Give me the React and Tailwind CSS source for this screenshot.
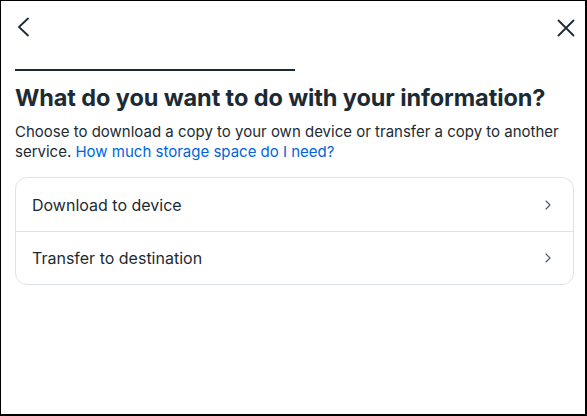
import { ChevronRight } from 'lucide-react';

const options = ['Download to device', 'Transfer to destination'];

export default function App() {
  return (
    <div
      className="w-[587px] h-[416px] bg-white border border-r-2 border-b-2 border-black text-[#1c2b33] overflow-hidden"
      style={{ fontFamily: 'Inter, "Noto Sans", sans-serif' }}
    >
      {/* header */}
      <div className="flex items-start justify-between pl-[15px] pr-[10px] pt-[16px] h-[40px]">
        <svg width="14" height="20" viewBox="0 0 14 20" fill="none">
          <path d="M12 1.5 3 10l9 8.5" stroke="#1c2b33" strokeWidth="1.8" strokeLinecap="round" strokeLinejoin="round" />
        </svg>
        <svg width="18" height="18" viewBox="0 0 18 18" fill="none" className="mt-[2px]">
          <path d="M1.5 1.5l15 15M16.5 1.5l-15 15" stroke="#1c2b33" strokeWidth="1.8" strokeLinecap="round" />
        </svg>
      </div>

      <div className="pl-[14px] pr-[11px]">
        {/* progress line */}
        <div className="mt-[28px] h-[2px] w-[280px] bg-[#1c2b33]" />

        <h1 className="mt-[12px] text-[23.5px] leading-[30px] font-bold tracking-[-0.1px]">
          What do you want to do with your information?
        </h1>

        <p className="mt-[9px] text-[15px] leading-[20px] text-[#1c2b33]">
          Choose to download a copy to your own device or transfer a copy to another
          service.{' '}
          <span className="text-[#0064e0]">How much storage space do I need?</span>
        </p>

        {/* options */}
        <div className="mt-[15px] border border-[#dee3e9] rounded-[12px] overflow-hidden">
          {options.map((o, i) => (
            <div
              key={o}
              className={
                'flex items-center justify-between h-[53px] pl-[16px] pr-[17px] ' +
                (i > 0 ? 'border-t border-[#dee3e9]' : '')
              }
            >
              <span className="text-[16px]">{o}</span>
              <ChevronRight size={16} strokeWidth={1.6} className="text-[#465a69]" />
            </div>
          ))}
        </div>
      </div>
    </div>
  );
}
